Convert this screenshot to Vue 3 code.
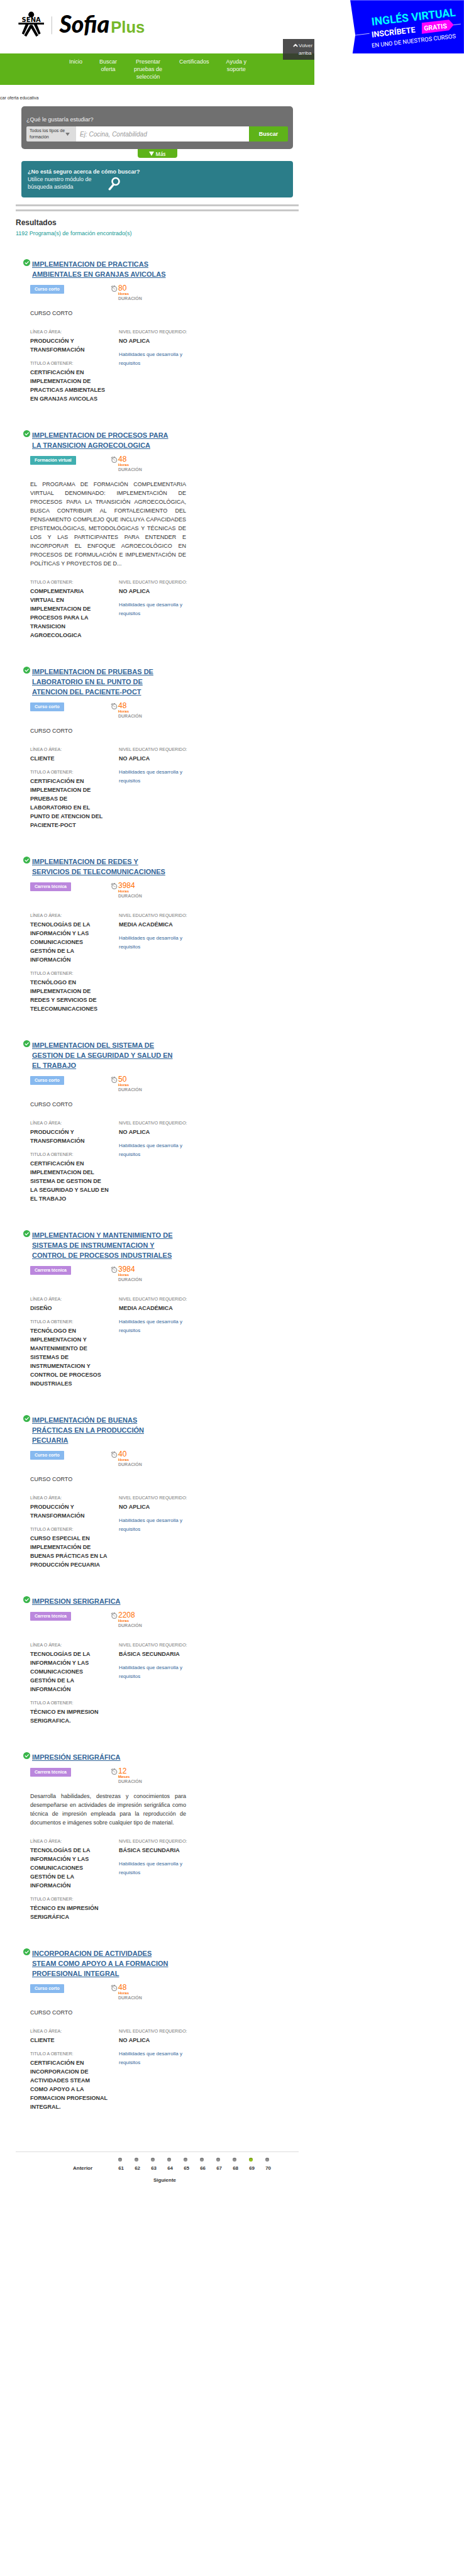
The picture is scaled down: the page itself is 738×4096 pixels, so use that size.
<script setup>
const menu = [
  ['Inicio'],
  ['Buscar', 'oferta'],
  ['Presentar', 'pruebas de', 'selección'],
  ['Certificados'],
  ['Ayuda y', 'soporte'],
]

const kinds = {
  corto: 'Curso corto',
  virtual: 'Formación virtual',
  tecnica: 'Carrera técnica',
}

const tic = 'TECNOLOGÍAS DE LA INFORMACIÓN Y LAS COMUNICACIONES GESTIÓN DE LA INFORMACIÓN'

const programs = [
  {
    name: 'IMPLEMENTACION DE PRACTICAS AMBIENTALES EN GRANJAS AVICOLAS',
    kind: 'corto', amount: '80', unit: 'Horas', text: 'CURSO CORTO',
    area: 'PRODUCCIÓN Y TRANSFORMACIÓN',
    degree: 'CERTIFICACIÓN EN IMPLEMENTACION DE PRACTICAS AMBIENTALES EN GRANJAS AVICOLAS',
    level: 'NO APLICA',
  },
  {
    name: 'IMPLEMENTACION DE PROCESOS PARA LA TRANSICION AGROECOLOGICA',
    kind: 'virtual', amount: '48', unit: 'Horas',
    text: 'EL PROGRAMA DE FORMACIÓN COMPLEMENTARIA VIRTUAL DENOMINADO: IMPLEMENTACIÓN DE PROCESOS PARA LA TRANSICIÓN AGROECOLÓGICA, BUSCA CONTRIBUIR AL FORTALECIMIENTO DEL PENSAMIENTO COMPLEJO QUE INCLUYA CAPACIDADES EPISTEMOLÓGICAS, METODOLÓGICAS Y TÉCNICAS DE LOS Y LAS PARTICIPANTES PARA ENTENDER E INCORPORAR EL ENFOQUE AGROECOLÓGICO EN PROCESOS DE FORMULACIÓN E IMPLEMENTACIÓN DE POLÍTICAS Y PROYECTOS DE D...',
    area: '',
    degree: 'COMPLEMENTARIA VIRTUAL EN IMPLEMENTACION DE PROCESOS PARA LA TRANSICION AGROECOLOGICA',
    level: 'NO APLICA',
  },
  {
    name: 'IMPLEMENTACION DE PRUEBAS DE LABORATORIO EN EL PUNTO DE ATENCION DEL PACIENTE-POCT',
    kind: 'corto', amount: '48', unit: 'Horas', text: 'CURSO CORTO',
    area: 'CLIENTE',
    degree: 'CERTIFICACIÓN EN IMPLEMENTACION DE PRUEBAS DE LABORATORIO EN EL PUNTO DE ATENCION DEL PACIENTE-POCT',
    level: 'NO APLICA',
  },
  {
    name: 'IMPLEMENTACION DE REDES Y SERVICIOS DE TELECOMUNICACIONES',
    kind: 'tecnica', amount: '3984', unit: 'Horas', text: '',
    area: tic,
    degree: 'TECNÓLOGO EN IMPLEMENTACION DE REDES Y SERVICIOS DE TELECOMUNICACIONES',
    level: 'MEDIA ACADÉMICA',
  },
  {
    name: 'IMPLEMENTACION DEL SISTEMA DE GESTION DE LA SEGURIDAD Y SALUD EN EL TRABAJO',
    kind: 'corto', amount: '50', unit: 'Horas', text: 'CURSO CORTO',
    area: 'PRODUCCIÓN Y TRANSFORMACIÓN',
    degree: 'CERTIFICACIÓN EN IMPLEMENTACION DEL SISTEMA DE GESTION DE LA SEGURIDAD Y SALUD EN EL TRABAJO',
    level: 'NO APLICA',
  },
  {
    name: 'IMPLEMENTACION Y MANTENIMIENTO DE SISTEMAS DE INSTRUMENTACION Y CONTROL DE PROCESOS INDUSTRIALES',
    kind: 'tecnica', amount: '3984', unit: 'Horas', text: '',
    area: 'DISEÑO',
    degree: 'TECNÓLOGO EN IMPLEMENTACION Y MANTENIMIENTO DE SISTEMAS DE INSTRUMENTACION Y CONTROL DE PROCESOS INDUSTRIALES',
    level: 'MEDIA ACADÉMICA',
  },
  {
    name: 'IMPLEMENTACIÓN DE BUENAS PRÁCTICAS EN LA PRODUCCIÓN PECUARIA',
    kind: 'corto', amount: '40', unit: 'Horas', text: 'CURSO CORTO',
    area: 'PRODUCCIÓN Y TRANSFORMACIÓN',
    degree: 'CURSO ESPECIAL EN IMPLEMENTACIÓN DE BUENAS PRÁCTICAS EN LA PRODUCCIÓN PECUARIA',
    level: 'NO APLICA',
  },
  {
    name: 'IMPRESION SERIGRAFICA',
    kind: 'tecnica', amount: '2208', unit: 'Horas', text: '',
    area: tic,
    degree: 'TÉCNICO EN IMPRESION SERIGRAFICA.',
    level: 'BÁSICA SECUNDARIA',
  },
  {
    name: 'IMPRESIÓN SERIGRÁFICA',
    kind: 'tecnica', amount: '12', unit: 'Meses',
    text: 'Desarrolla habilidades, destrezas y conocimientos para desempeñarse en actividades de impresión serigráfica como técnica de impresión empleada para la reproducción de documentos e imágenes sobre cualquier tipo de material.',
    area: tic,
    degree: 'TÉCNICO EN IMPRESIÓN SERIGRÁFICA',
    level: 'BÁSICA SECUNDARIA',
  },
  {
    name: 'INCORPORACION DE ACTIVIDADES STEAM COMO APOYO A LA FORMACION PROFESIONAL INTEGRAL',
    kind: 'corto', amount: '48', unit: 'Horas', text: 'CURSO CORTO',
    area: 'CLIENTE',
    degree: 'CERTIFICACIÓN EN INCORPORACION DE ACTIVIDADES STEAM COMO APOYO A LA FORMACION PROFESIONAL INTEGRAL.',
    level: 'NO APLICA',
  },
]

const pages = [61, 62, 63, 64, 65, 66, 67, 68, 69, 70]
const currentPage = 69
</script>

<template>
  <div class="shell">
    <div class="column">
      <header class="top">
        <svg class="logo" viewBox="0 0 400 136" role="img" aria-label="SENA Sofia Plus">
          <circle cx="79.5" cy="37" r="7.3" />
          <text class="logo-sena" x="79.5" y="55.5" text-anchor="middle">SENA</text>
          <path d="M47 57.5H112V62.5H47Z" />
          <path d="M65 62H73L60.700 88L55.600 85.300Z" />
          <path d="M94 62H86L98.300 88L103.400 85.300Z" />
          <path d="M76.500 63H82.500L97.500 90L92 93L79.500 72L67 93L61.500 90Z" />
          <path d="M131.600 42V87" stroke="#999" stroke-width="1" />
          <text class="logo-sofia" x="151" y="83">Sofia</text>
          <text class="logo-plus" x="282" y="83">Plus</text>
        </svg>
        <a class="back" href="#inicio">
          <svg viewBox="0 0 12 8"><path d="M2 6.500L6 2L10 6.500" fill="none" stroke="#eee" stroke-width="2.800" stroke-linecap="round" stroke-linejoin="round" /></svg>
          <span>Volver arriba</span>
        </a>
      </header>

      <nav class="menu">
        <a v-for="item in menu" :key="item[0]" href="#menu">
          <span v-for="line in item" :key="line">{{ line }}</span>
        </a>
      </nav>

      <p class="crumb">car oferta educativa</p>

      <main class="content">
        <form class="search" @submit.prevent>
          <label class="search-label" for="term">¿Qué le gustaría estudiar?</label>
          <div class="search-row">
            <button class="kind-picker" type="button">
              <span>Todos los tipos de formación</span>
              <svg viewBox="0 0 8 6"><path d="M0 0H8L4 6Z" fill="#777" /></svg>
            </button>
            <input id="term" type="text" placeholder="Ej: Cocina, Contabilidad">
            <button class="go" type="submit">Buscar</button>
          </div>
        </form>
        <button class="more" type="button">
          <svg viewBox="0 0 8 8"><path d="M0 1H8L4 8Z" fill="#fff" /></svg>
          Más
        </button>

        <a class="assist" href="#asistida">
          <strong>¿No está seguro acerca de cómo buscar?</strong>
          <span class="assist-row">
            <span class="assist-text">Utilice nuestro módulo de búsqueda asistida</span>
            <svg viewBox="0 0 19 22"><circle cx="12" cy="7.500" r="5.500" fill="none" stroke="#fff" stroke-width="2.600" /><path d="M8.500 12.500L2.300 19.800" stroke="#fff" stroke-width="3.400" stroke-linecap="round" /></svg>
          </span>
        </a>

        <div class="rules"></div>

        <h1>Resultados</h1>
        <p class="count">1192 Programa(s) de formación encontrado(s)</p>

        <article v-for="p in programs" :key="p.name" class="program">
          <h2>
            <svg viewBox="0 0 18 18"><circle cx="9" cy="9" r="9" fill="#39b54a" /><path d="M4.500 9L8 12.500L14 6" fill="none" stroke="#fff" stroke-width="2.200" /></svg>
            <a href="#programa">{{ p.name }}</a>
          </h2>
          <div class="meta">
            <span class="tag" :class="p.kind">{{ kinds[p.kind] }}</span>
            <div class="duration">
              <svg viewBox="0 0 17 17"><circle cx="9" cy="10" r="6" fill="none" stroke="#999" stroke-width="2" /><path d="M5 6.500L9 10L12 10.500" fill="none" stroke="#999" stroke-width="1.200" /><path d="M7 1.500H11V3.500H7ZM0.500 4.500L4.500 1L5.500 3L2 6Z" fill="#999" /></svg>
              <p><b class="amount">{{ p.amount }}</b><b class="unit">{{ p.unit }}</b><b class="caption">DURACIÓN</b></p>
            </div>
          </div>
          <p v-if="p.text" class="text">{{ p.text }}</p>
          <div class="facts" :class="{ bare: !p.text }">
            <dl>
              <template v-if="p.area">
                <dt>LÍNEA O ÁREA:</dt>
                <dd>{{ p.area }}</dd>
              </template>
              <dt>TITULO A OBTENER:</dt>
              <dd>{{ p.degree }}</dd>
            </dl>
            <div>
              <dl>
                <dt>NIVEL EDUCATIVO REQUERIDO:</dt>
                <dd>{{ p.level }}</dd>
              </dl>
              <a class="skills" href="#habilidades">Habilidades que desarrolla y requisitos</a>
            </div>
          </div>
        </article>

        <footer class="pager">
          <div class="pager-row">
            <a href="#anterior">Anterior</a>
            <ol>
              <li v-for="n in pages" :key="n" :class="{ current: n === currentPage }">
                <a href="#pagina">{{ n }}</a>
              </li>
            </ol>
          </div>
          <a class="next" href="#siguiente">Siguiente</a>
        </footer>
      </main>
    </div>

    <aside>
      <a class="banner" href="#ingles">
        <svg viewBox="0 0 289 136" role="img" aria-label="Inglés virtual, inscríbete gratis">
          <path d="M0 0H289V136H6L13 89Z" fill="#00f" />
          <path d="M0 0H289V1H0Z" fill="#7a7aff" />
          <path d="M13 89.500L49 85M261 63.500L281 61" stroke="#fff" stroke-width="1.200" />
          <path d="M182 58L251 50L263 63L251 77L182 86Z" fill="#f0f" />
          <g class="banner-text">
            <text class="b1" transform="translate(55 65) rotate(-6.500)">INGLÉS VIRTUAL</text>
            <text class="b2" transform="translate(55 95) rotate(-6.500)">INSCRÍBETE</text>
            <text class="b3" transform="translate(188 78) rotate(-6.500)">GRATIS</text>
            <text class="b4" transform="translate(55 121) rotate(-6.500)">EN UNO DE NUESTROS CURSOS</text>
          </g>
        </svg>
      </a>
    </aside>
  </div>
</template>

<style>
body {
  background: #fff;
}
</style>

<style scoped>
p, h1, h2, dl, dd, ol {
  margin: 0;
  padding: 0;
}
.shell {
  display: grid;
  grid-template-columns: minmax(0, 500fr) minmax(0, 238fr);
  font-family: "Liberation Sans", Arial, sans-serif;
  font-size: 9px;
  line-height: 14px;
  color: #333;
}
a {
  color: inherit;
  text-decoration: none;
}
svg {
  display: block;
  flex: none;
}
button, input {
  font-family: inherit;
  border: 0;
  margin: 0;
  padding: 0;
}
.top {
  position: relative;
  height: 85px;
}
.logo {
  width: 250px;
  height: 85px;
}
.logo-sena {
  font: bold 16px "DejaVu Sans", sans-serif;
}
.logo-sofia {
  font: italic 900 60px Lato, sans-serif;
}
.logo-plus {
  font: bold 41px "Liberation Sans", sans-serif;
  fill: #76b82a;
}
.back {
  position: absolute;
  top: 62px;
  right: 0;
  z-index: 1;
  box-sizing: border-box;
  display: flex;
  gap: 1px;
  width: 50px;
  height: 33px;
  padding: 5px 0 0 16px;
  background: rgba(51, 51, 51, 0.87);
  color: #eee;
  font-size: 8px;
  line-height: 12px;
}
.back svg {
  width: 8px;
  height: 6px;
  margin-top: 2px;
}
.menu {
  display: flex;
  gap: 27px;
  box-sizing: border-box;
  min-height: 50px;
  padding: 7px 0 7px 110px;
  background: #5eb319;
  color: #f4f9ef;
  line-height: 12px;
  text-align: center;
}
.menu span {
  display: block;
}
.crumb {
  padding: 14px 0 6px;
  font-size: 7px;
}
.content {
  padding: 0 25px;
}
.search {
  margin: 0 9px;
  padding: 14px 8px 12px;
  border-radius: 5px;
  background: #707070;
}
.search-label {
  display: block;
  margin-bottom: 4px;
  color: #f2f2f2;
}
.search-row {
  display: flex;
  height: 24px;
  border-radius: 2px;
  overflow: hidden;
}
.kind-picker {
  display: flex;
  align-items: center;
  width: 79px;
  padding: 0 5px;
  background: #ddd;
  color: #333;
  font-size: 7px;
  line-height: 10px;
  text-align: left;
}
.kind-picker svg {
  width: 7px;
  height: 5px;
}
.kind-picker span {
  width: 57px;
  white-space: normal;
}
.search-row input {
  flex: 1;
  min-width: 0;
  padding: 0 6px;
  background: #fff;
  font-size: 10px;
}
.search-row input::placeholder {
  color: #999;
  font-style: italic;
}
.go {
  width: 62px;
  background: #5eb319;
  color: #fff;
  font-size: 9px;
  font-weight: bold;
}
.more {
  display: flex;
  align-items: center;
  justify-content: center;
  gap: 3px;
  width: 63px;
  height: 14px;
  margin: 0 auto;
  border-radius: 0 0 4px 4px;
  background: #5eb319;
  color: #fff;
  font: 600 8px "Open Sans", sans-serif;
}
.more svg {
  width: 8px;
  height: 8px;
}
.assist {
  display: block;
  margin: 5px 9px 0;
  padding: 11px 10px;
  border-radius: 4px;
  background: #2b7d89;
  color: #f2f8f9;
  line-height: 12px;
}
.assist strong {
  display: block;
}
.assist-row {
  display: flex;
  gap: 20px;
}
.assist-text {
  width: 108px;
}
.assist svg {
  width: 19px;
  height: 22px;
  margin-top: 2px;
}
.rules {
  height: 5px;
  margin-top: 11px;
  border-top: 3px solid #c8c8c8;
  border-bottom: 3px solid #c8c8c8;
}
h1 {
  padding-top: 10px;
  font-size: 12px;
  line-height: 16px;
}
.count {
  padding: 2px 0 34px;
  color: #129a95;
}
.program {
  padding: 0 12px 43px;
}
h2 {
  display: flex;
  gap: 3px;
  width: 245px;
  font-size: 11px;
  line-height: 16px;
  color: #369;
}
h2 svg {
  width: 11px;
  height: 11px;
}
h2 a {
  text-decoration: underline;
}
.meta {
  display: grid;
  grid-template-columns: 128px 1fr;
  height: 26px;
  margin: 9px 0 0 11px;
}
.tag {
  justify-self: start;
  height: 14px;
  padding: 0 7px;
  border-radius: 1px;
  color: #fff;
  font-size: 7px;
  font-weight: bold;
}
.corto {
  background: #87b9ef;
}
.virtual {
  background: #40afb0;
}
.tecnica {
  background: #bb87dd;
}
.duration {
  display: flex;
  gap: 1px;
}
.duration svg {
  width: 11px;
  height: 11px;
}
.duration b {
  display: block;
  font-size: 7px;
  line-height: 8px;
}
.duration .amount {
  font-size: 12px;
  font-weight: normal;
  line-height: 10px;
  color: #ff6d00;
}
.duration .unit {
  font-size: 6px;
  color: #ff6d00;
}
.duration .caption {
  color: #999;
}
.text {
  width: 248px;
  padding: 12px 0 0 11px;
  text-align: justify;
}
.facts {
  display: grid;
  grid-template-columns: 125px 110px;
  gap: 16px;
  padding: 16px 0 0 11px;
}
.facts.bare {
  padding-top: 20px;
}
dt {
  font-size: 7px;
  color: #777;
  white-space: nowrap;
}
dd {
  font-weight: bold;
}
dd + dt {
  padding-top: 8px;
}
.skills {
  display: block;
  padding-top: 8px;
  font-size: 8px;
  color: #369;
}
.program + .pager {
  margin-top: 21px;
}
.pager {
  border-top: 1px solid #ddd;
  padding-top: 9px;
  font-size: 8px;
  font-weight: bold;
}
.pager-row {
  display: flex;
  align-items: flex-end;
  gap: 41px;
  padding-left: 91px;
}
ol {
  display: flex;
  list-style: none;
}
li {
  width: 26px;
}
li::before {
  content: "";
  display: block;
  width: 6px;
  height: 6px;
  margin-bottom: 4px;
  border-radius: 50%;
  background: #919191;
  box-shadow: inset 0 1px 1px #666;
}
li.current::before {
  background: #93c01f;
  box-shadow: inset 0 1px 1px #678a10;
}
.next {
  display: block;
  padding-top: 5px;
  margin-left: 24px;
  text-align: center;
}
.banner {
  display: block;
  width: 76%;
  margin-left: auto;
}
.banner svg {
  width: 100%;
}
.banner-text {
  font-family: Roboto, "Liberation Sans", sans-serif;
  font-weight: bold;
  fill: #fff;
}
.b1 {
  font-size: 28px;
  fill: #0ff;
}
.b2 {
  font-size: 20px;
}
.b3 {
  font-size: 17px;
}
.b4 {
  font-size: 15px;
  font-weight: normal;
}
</style>
